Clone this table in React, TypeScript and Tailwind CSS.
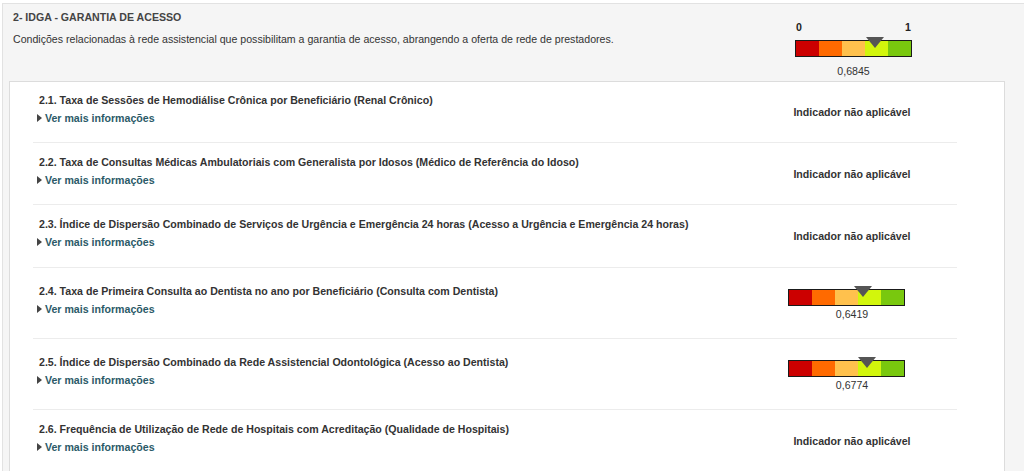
import React from "react";

type Indicator = {
    title: string;
    value?: number;
};

const indicators: Indicator[] = [
    { title: "2.1. Taxa de Sessões de Hemodiálise Crônica por Beneficiário (Renal Crônico)" },
    { title: "2.2. Taxa de Consultas Médicas Ambulatoriais com Generalista por Idosos (Médico de Referência do Idoso)" },
    { title: "2.3. Índice de Dispersão Combinado de Serviços de Urgência e Emergência 24 horas (Acesso a Urgência e Emergência 24 horas)" },
    { title: "2.4. Taxa de Primeira Consulta ao Dentista no ano por Beneficiário (Consulta com Dentista)", value: 0.6419 },
    { title: "2.5. Índice de Dispersão Combinado da Rede Assistencial Odontológica (Acesso ao Dentista)", value: 0.6774 },
    { title: "2.6. Frequência de Utilização de Rede de Hospitais com Acreditação (Qualidade de Hospitais)" },
];

const fmt = (v: number) => v.toFixed(4).replace(".", ",");

function Bar({ value }: { value: number }) {
    return (
        <div className="relative w-[117px] h-[17px] border border-[#1a1a1a] flex">
            <div className="flex-1 bg-[#cc0000]" />
            <div className="flex-1 bg-[#ff6a00]" />
            <div className="flex-1 bg-[#ffc14d]" />
            <div className="flex-1 bg-[#d2f60c]" />
            <div className="flex-1 bg-[#79c80e]" />
            {/* marker */}
            <svg
                className="absolute top-[-4px]"
                style={{ left: `${value * 115 - 9}px` }}
                width="18"
                height="11"
                viewBox="0 0 18 11"
            >
                <path d="M0 0 H18 L9 11 Z" fill="#555555" />
            </svg>
        </div>
    );
}

function Row({ item, index }: { item: Indicator; index: number }) {
    const first = index === 0;
    let pad = "py-[11px]";
    if (!first && item.value === undefined) pad = index === 1 ? "pt-[12px] pb-[11px]" : "py-[12px]";
    return (
        <div className={`flex items-center ${pad} ${first ? "" : "border-t border-[#ececec]"}`}>
            <div className="flex-1 pb-[6px]">
                <div className="pl-[6px] leading-[14px] font-bold text-[#333]">{item.title}</div>
                <div className="mt-[4px] pl-[4px] flex items-center gap-[3px] leading-[14px]">
                    <svg width="5" height="8" viewBox="0 0 5 8">
                        <path d="M0 0 L5 4 L0 8 Z" fill="#444" />
                    </svg>
                    <span className="font-bold text-[#2b5a68]">Ver mais informações</span>
                </div>
            </div>
            <div className="w-[210px] flex flex-col items-center">
                {item.value === undefined ? (
                    <span className="font-bold text-[#333] leading-[14px]">Indicador não aplicável</span>
                ) : (
                    <div className="flex flex-col items-center pt-[10px] pb-[6px]">
                        <div className="mr-[11px]">
                            <Bar value={item.value} />
                        </div>
                        <div className="mt-[1px] leading-[14px] text-[#333]">{fmt(item.value)}</div>
                    </div>
                )}
            </div>
        </div>
    );
}

export default function App() {
    return (
        <div className="h-[471px] overflow-hidden bg-white pt-[3px] pl-[2px] text-[10.6px] font-['Liberation_Sans',Arial,sans-serif]">
            <div className="min-h-[500px] bg-[#f5f5f5] border-l border-t border-[#e2e2e2] pl-[6px]">
                <div className="flex h-[77px]">
                    <div className="flex-1 pl-[4px] pt-[6px]">
                        <div className="font-bold text-[#444] leading-[14px]">2- IDGA - GARANTIA DE ACESSO</div>
                        <div className="mt-[8px] text-[#333] leading-[14px]">
                            Condições relacionadas à rede assistencial que possibilitam a garantia de acesso, abrangendo a oferta de rede de prestadores.
                        </div>
                    </div>
                    <div className="w-[117px] mr-[112px] pt-[16px] text-[#222]">
                        <div className="flex justify-between px-[1px] leading-[14px] font-bold">
                            <span>0</span>
                            <span>1</span>
                        </div>
                        <div className="mt-[6px]">
                            <Bar value={0.6845} />
                        </div>
                        <div className="mt-[7px] text-center leading-[14px] text-[#333]">0,6845</div>
                    </div>
                </div>
                <div className="w-[996px] min-h-[420px] bg-white border border-[#dcdcdc] pl-[23px]">
                    <div className="w-[924px]">
                        {indicators.map((item, i) => (
                            <Row key={item.title} item={item} index={i} />
                        ))}
                    </div>
                </div>
            </div>
        </div>
    );
}
